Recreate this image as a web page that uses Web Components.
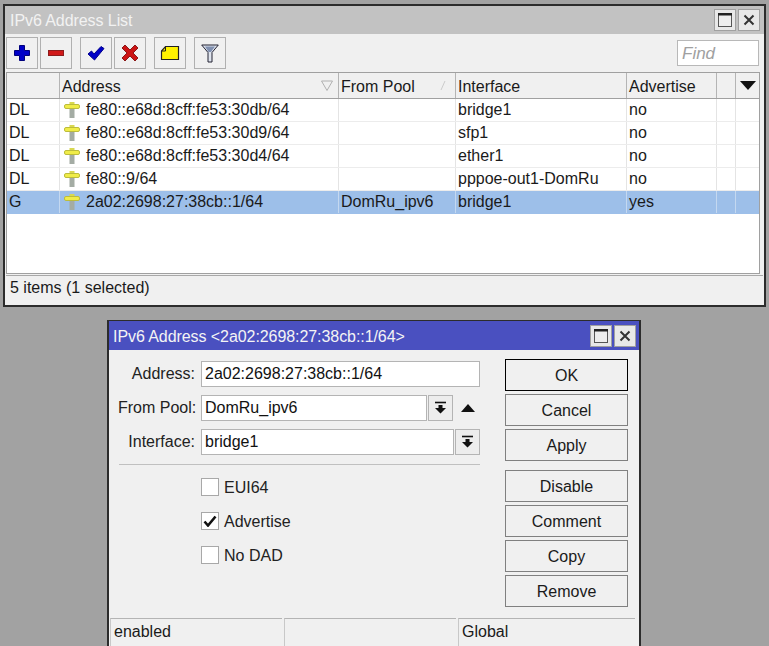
<!DOCTYPE html>
<html><head><meta charset="utf-8"><title>IPv6 Address List</title>
<style>
html,body{margin:0;height:646px;overflow:hidden;background:#a2a2a2;font:16px/20px "Liberation Sans",Arial,sans-serif;color:#1a1a1a}
mt-desk{display:block;position:relative;width:769px;height:646px;overflow:hidden}
#list{left:3px;top:4px;width:759px;height:299px;--rm:3px;--tpr:4px}
#dlg{left:107px;top:320px;width:530px;height:340px;--tbar:#4a50c0;--ttext:#f4f4f4;--tpad:4px;--tbh:29px;--tpr:3px;--btop:1px}
</style></head><body>
<template id="t-win"><style>
:host{display:flex;flex-direction:column;position:absolute;border:2px solid #2c2c2c;border-top-width:var(--btop,2px);background:#f0f0f0;box-sizing:content-box}
.t{display:flex;align-items:center;height:var(--tbh,28px);flex:none;background:var(--tbar,#c2c2c2);color:var(--ttext,#f2f2f2);padding-left:var(--tpad,5px);padding-right:var(--tpr,3px);gap:2px;letter-spacing:-.07px}
.n{flex:1;white-space:nowrap;padding-top:2px}
.b{width:20px;height:20px;border:1px solid #a0a0a0;background:#e8e8e8;display:flex;align-items:center;justify-content:center}
.b svg{display:block}
.c{flex:1;display:flex;flex-direction:column;min-height:0}
</style><div class="t"><span class="n"><slot name="title"></slot></span>
<span class="b"><svg width="16" height="16"><rect x="1.500" y="1.500" width="13" height="13" fill="#eee" stroke="#555"/><rect x="1" y="1" width="14" height="2.500" fill="#222"/></svg></span>
<span class="b"><svg width="14" height="14"><path d="M2.500 2.500l9 9M11.500 2.500l-9 9" stroke="#333" stroke-width="2" fill="none"/></svg></span></div>
<div class="c"><slot></slot></div></template>

<template id="t-tbar"><style>
:host{display:flex;align-items:flex-start;height:38px;padding:3px 4px 0 1px;box-sizing:border-box;flex:none}
.s{flex:1}
</style><slot></slot><span class="s"></span><slot name="end"></slot></template>

<template id="t-tool"><style>
:host{display:flex;align-items:center;justify-content:center;width:30px;height:30px;border:1px solid #b0b0b0;background:#f0f0f0;margin-right:2px;flex:none}
</style><slot></slot></template>

<template id="t-find"><style>
:host{display:block;width:82px;height:26px;box-sizing:border-box;margin:3px 1px 0 0;border:1px solid #b8b8b8;background:#fff;padding:3px 4px;color:#a0a0a0;font-style:italic;font-size:17px}
</style><slot></slot></template>

<template id="t-table"><style>
:host{display:block;flex:1;margin:0 4px 0 1px;border:1px solid #a0a0a0;background:#fff;min-height:0;overflow:hidden}
</style><slot></slot></template>

<template id="t-row"><style>
:host{display:grid;grid-template-columns:53px 279px 117px 171px 90px 19px 1fr;height:23px;box-sizing:border-box;border-bottom:1px solid #ececec;line-height:20px;--sep:#e4e4e4}
:host([head]){height:26px;background:#f0f0f0;border-bottom:1px solid #a0a0a0;--sep:#b4b4b4}
:host([sel]){background:#9dbfe9;--sep:#c4d8f0;border-bottom-color:#9dbfe9}
::slotted(*){border-right:1px solid var(--sep);padding-left:2px;white-space:nowrap;overflow:hidden;display:flex;align-items:center;gap:6px;min-width:0}
::slotted(:last-child){border-right:none;padding-left:0;justify-content:center}
:host([head]) ::slotted(*){padding-top:2px}
</style><slot></slot></template>

<template id="t-status"><style>
:host{display:block;height:30px;flex:none;margin:1px 1px 0;border-top:1px solid #a8a8a8;padding:2px 4px 0;box-sizing:border-box;line-height:20px;background:#f0f0f0}
</style><slot></slot></template>

<template id="t-form"><style>
:host{display:grid;grid-template-columns:372px 123px;column-gap:15px;padding:10px 0 0 9px;flex:none;height:268px;box-sizing:border-box;align-items:start}
.l{display:flex;flex-direction:column;gap:8px;padding-top:1px;width:362px}
.r{display:flex;flex-direction:column;gap:3px;margin-top:-1px}
</style><div class="l"><slot></slot></div><div class="r"><slot name="buttons"></slot></div></template>

<template id="t-field"><style>
:host{display:flex;align-items:center;height:26px;gap:1px}
.k{width:77px;text-align:right;margin-right:5px;flex:none;white-space:nowrap;color:#222}
.v{height:26px;box-sizing:border-box;border:1px solid #b4b4b4;background:#fff;padding:2px 3px;flex:none;color:#111;line-height:20px;white-space:nowrap;width:var(--w,279px)}
::slotted(*){flex:none}
</style><span class="k"><slot name="k"></slot></span><span class="v"><slot name="v"></slot></span><slot></slot></template>

<template id="t-drop"><style>
:host{display:flex;align-items:center;justify-content:center;width:25px;height:26px;box-sizing:border-box;border:1px solid #b4b4b4;background:#ededed}
</style><svg width="13" height="14"><path d="M1 1.500h11" stroke="#111" stroke-width="1.600"/><path d="M4.500 4h4v3h3.500l-5.500 5.500L1 7h3.500z" fill="#111"/></svg></template>

<template id="t-sep"><style>
:host{display:block;height:1px;background:#c0c0c0;margin:1px 0 5px 1px}
</style></template>

<template id="t-check"><style>
:host{display:flex;align-items:center;gap:5px;height:18px;margin:0 0 8px 83px;color:#222}
.b{width:18px;height:18px;box-sizing:border-box;border:1px solid #a8a8a8;background:#fff;display:flex;align-items:center;justify-content:center}
.x{padding-top:2px}
svg{display:none}
:host([on]) svg{display:block}
</style><span class="b"><svg width="14" height="12"><path d="M1.500 6.500L5 10.500 12.500 1.500" fill="none" stroke="#111" stroke-width="2.600"/></svg></span><span class="x"><slot></slot></span></template>

<template id="t-btn"><style>
:host{display:flex;align-items:center;justify-content:center;height:32px;box-sizing:border-box;border:1px solid #808080;background:#f0f0f0;color:#1a1a1a;padding-top:1px}
:host([def]){border-color:#000}
:host([brk]){margin-top:6px}
</style><slot></slot></template>

<template id="t-sbar"><style>
:host{display:grid;grid-template-columns:172px 172px 177px;column-gap:2px;padding:0 2px 0 1px;height:40px;box-sizing:border-box}
::slotted(*){border-top:1px solid #b4b4b4;border-left:1px solid #c8c8c8;padding:3px 3px 0;line-height:20px}
</style><slot></slot></template>

<template id="t-pin"><style>
:host{display:block;width:16px;height:18px;flex:none;margin-left:2px}svg{display:block}
</style><svg width="16" height="18" viewBox="0 0 16 18"><rect x="5.500" y="8" width="5" height="9" fill="#a4aca4"/><rect x="5.500" y="1" width="5" height="5" fill="#d8d850"/><rect x="0.500" y="3.500" width="15" height="4" rx="1.500" fill="#f0ec48" stroke="#bcbc3c"/></svg></template>

<mt-desk>
<mt-win id="list">
<span slot="title">IPv6 Address List</span>
<mt-tbar>
<mt-tool><svg width="18" height="18"><path d="M6.500 1.500h5v5h5v5h-5v5h-5v-5h-5v-5h5z" fill="#0000c8" stroke="#00007c"/></svg></mt-tool>
<mt-tool><svg width="18" height="18"><rect x="1.500" y="6.500" width="15" height="5" fill="#d01818" stroke="#8c1c1c"/></svg></mt-tool>
<span style="width:6px"></span>
<mt-tool><svg width="18" height="18"><path d="M1 10l3.500-3 2.500 3L14 2.500l3 2L7.500 16z" fill="#0000c8" stroke="#00008c"/></svg></mt-tool>
<mt-tool><svg width="18" height="18"><path d="M4 1l5 5 5-5 3 3-5 5 5 5-3 3-5-5-5 5-3-3 5-5-5-5z" fill="#cc1414" stroke="#8c1818"/></svg></mt-tool>
<span style="width:6px"></span>
<mt-tool><svg width="20" height="16"><path d="M5.500 1.500H18.500V14.500H1.500V6z" fill="#fff200" stroke="#222" stroke-width="1.200"/><path d="M5.500 1.500V6H1.500" fill="none" stroke="#222"/></svg></mt-tool>
<span style="width:6px"></span>
<mt-tool><svg width="18" height="19"><path d="M0.700 1H17.300L11 8.500V18H7V8.500z" fill="#dfe4ee" stroke="#223"/><path d="M4 2.500h10L10 8h-2.500z" fill="#8090b0"/></svg></mt-tool>
<mt-find slot="end">Find</mt-find>
</mt-tbar>
<mt-table>
<mt-row head><span></span><span style="justify-content:space-between">Address<svg style="margin:-2px 5px 0 0" width="12" height="11"><path d="M0.500 1h11l-5.500 9.500z" fill="none" stroke="#b0b0b0"/></svg></span><span style="justify-content:space-between">From Pool<svg style="margin:-2px 9px 0 0" width="9" height="11"><path d="M8 1L4 10" stroke="#ccc"/></svg></span><span>Interface</span><span>Advertise</span><span></span><span><svg style="margin-top:-3px" width="16" height="9"><path d="M0 0h16L8 9z" fill="#111"/></svg></span></mt-row>
<mt-row><span>DL</span><span><mt-pin></mt-pin>fe80::e68d:8cff:fe53:30db/64</span><span></span><span>bridge1</span><span>no</span><span></span><span></span></mt-row>
<mt-row><span>DL</span><span><mt-pin></mt-pin>fe80::e68d:8cff:fe53:30d9/64</span><span></span><span>sfp1</span><span>no</span><span></span><span></span></mt-row>
<mt-row><span>DL</span><span><mt-pin></mt-pin>fe80::e68d:8cff:fe53:30d4/64</span><span></span><span>ether1</span><span>no</span><span></span><span></span></mt-row>
<mt-row><span>DL</span><span><mt-pin></mt-pin>fe80::9/64</span><span></span><span>pppoe-out1-DomRu</span><span>no</span><span></span><span></span></mt-row>
<mt-row sel><span>G</span><span><mt-pin></mt-pin>2a02:2698:27:38cb::1/64</span><span>DomRu_ipv6</span><span>bridge1</span><span>yes</span><span></span><span></span></mt-row>
</mt-table>
<mt-status>5 items (1 selected)</mt-status>
</mt-win>

<mt-win id="dlg">
<span slot="title">IPv6 Address &lt;2a02:2698:27:38cb::1/64&gt;</span>
<mt-form>
<mt-field><span slot="k">Address:</span><span slot="v">2a02:2698:27:38cb::1/64</span></mt-field>
<mt-field style="--w:226px"><span slot="k">From Pool:</span><span slot="v">DomRu_ipv6</span><mt-drop></mt-drop><svg style="margin-left:7px" width="14" height="8"><path d="M0 8L7 0l7 8z" fill="#111"/></svg></mt-field>
<mt-field style="--w:253px"><span slot="k">Interface:</span><span slot="v">bridge1</span><mt-drop></mt-drop></mt-field>
<mt-sep></mt-sep>
<mt-check>EUI64</mt-check>
<mt-check on>Advertise</mt-check>
<mt-check>No DAD</mt-check>
<mt-btn slot="buttons" def>OK</mt-btn>
<mt-btn slot="buttons">Cancel</mt-btn>
<mt-btn slot="buttons">Apply</mt-btn>
<mt-btn slot="buttons" brk>Disable</mt-btn>
<mt-btn slot="buttons">Comment</mt-btn>
<mt-btn slot="buttons">Copy</mt-btn>
<mt-btn slot="buttons">Remove</mt-btn>
</mt-form>
<mt-sbar><span>enabled</span><span></span><span>Global</span></mt-sbar>
</mt-win>
</mt-desk>
<script>
const simple=(name,tid)=>customElements.define(name,class extends HTMLElement{constructor(){super();this.attachShadow({mode:'open'}).appendChild(document.getElementById(tid).content.cloneNode(true));}});
customElements.define('mt-desk',class extends HTMLElement{constructor(){super();this.attachShadow({mode:'open'}).innerHTML='<style>:host{display:block}</style><slot></slot>';}});
[['mt-win','t-win'],['mt-tbar','t-tbar'],['mt-tool','t-tool'],['mt-find','t-find'],['mt-table','t-table'],['mt-row','t-row'],['mt-status','t-status'],['mt-form','t-form'],['mt-field','t-field'],['mt-drop','t-drop'],['mt-sep','t-sep'],['mt-check','t-check'],['mt-btn','t-btn'],['mt-sbar','t-sbar'],['mt-pin','t-pin']].forEach(a=>simple(...a));
</script>
</body></html>
